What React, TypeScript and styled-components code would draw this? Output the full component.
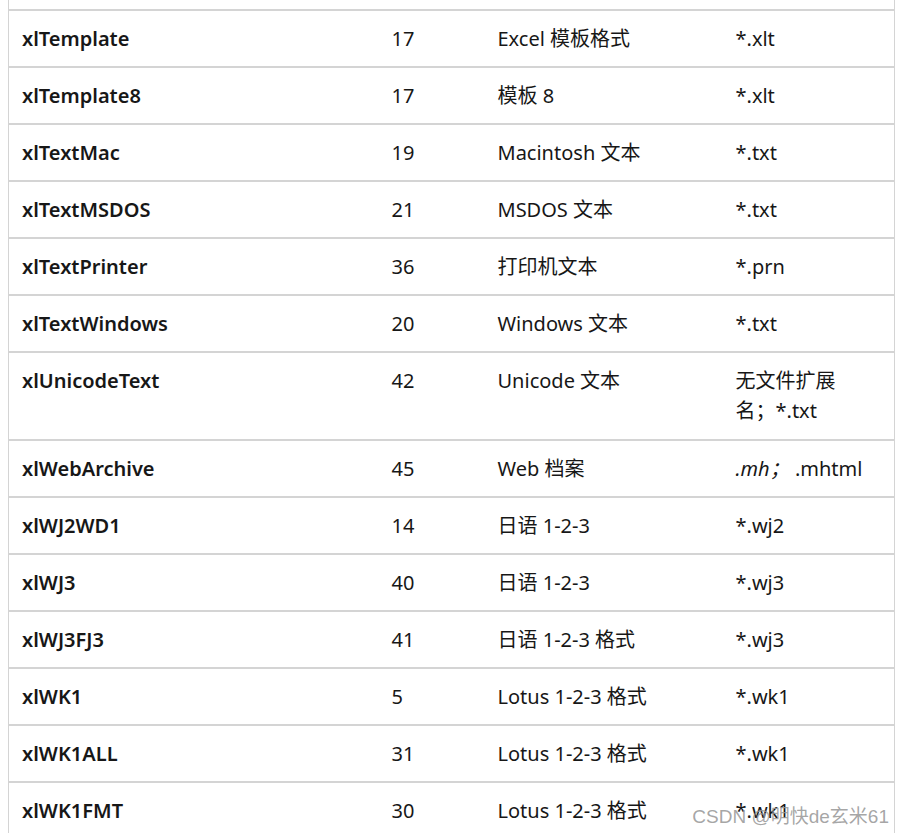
import React, {FC} from 'react';
import styled, {createGlobalStyle} from 'styled-components';

const GlobalStyle = createGlobalStyle`
  html, body {
    margin: 0;
    padding: 0;
    background: #ffffff;
  }
  body {
    padding-left: 8px;
    overflow: hidden;
    font-family: "Noto Sans", "Noto Sans CJK SC", sans-serif;
  }
`;

const Page = styled.div`
  position: relative;
  width: 887px;
  height: 833px;
  overflow: hidden;
`;

const Table = styled.table`
  width: 100%;
  border-collapse: collapse;
  table-layout: fixed;
  color: #171717;
  font-size: 20px;
  line-height: 30px;
`;

const Row = styled.tr<{tall?: boolean}>`
  border-top: 2px solid #d4d4d4;

  & > td {
    padding-bottom: ${props => props.tall ? '13px' : '12px'};
  }
`;

const StubRow = styled.tr`
  height: 10px;
`;

const Cell = styled.td<{bold?: boolean}>`
  padding: 13px 13px 12px 13px;
  vertical-align: top;
  font-weight: ${props => props.bold ? 600 : 400};
  border-left: ${props => props.bold ? '1px solid #d4d4d4' : 'none'};
  &:last-child {
    border-right: 1px solid #d4d4d4;
  }
`;

const StubCell = styled.td`
  padding: 0;
  &:first-child {
    border-left: 1px solid #d4d4d4;
  }
  &:last-child {
    border-right: 1px solid #d4d4d4;
  }
`;

const Italic = styled.em`
  font-style: italic;
`;

const Watermark = styled.div`
  position: absolute;
  right: 6px;
  top: 801px;
  font-family: "Liberation Sans", "Noto Sans CJK SC", sans-serif;
  font-size: 19px;
  color: rgba(150, 150, 150, 0.85);
  white-space: nowrap;
`;

type Entry = {
  name: string;
  value: string;
  desc: string;
  ext: React.ReactNode;
  tall?: boolean;
};

const entries: Entry[] = [
  {name: 'xlTemplate', value: '17', desc: 'Excel 模板格式', ext: '*.xlt'},
  {name: 'xlTemplate8', value: '17', desc: '模板 8', ext: '*.xlt'},
  {name: 'xlTextMac', value: '19', desc: 'Macintosh 文本', ext: '*.txt'},
  {name: 'xlTextMSDOS', value: '21', desc: 'MSDOS 文本', ext: '*.txt'},
  {name: 'xlTextPrinter', value: '36', desc: '打印机文本', ext: '*.prn'},
  {name: 'xlTextWindows', value: '20', desc: 'Windows 文本', ext: '*.txt'},
  {name: 'xlUnicodeText', value: '42', desc: 'Unicode 文本', ext: <>无文件扩展<br/>名；*.txt</>, tall: true},
  {name: 'xlWebArchive', value: '45', desc: 'Web 档案', ext: <><Italic>.mh；</Italic> .mhtml</>},
  {name: 'xlWJ2WD1', value: '14', desc: '日语 1-2-3', ext: '*.wj2'},
  {name: 'xlWJ3', value: '40', desc: '日语 1-2-3', ext: '*.wj3'},
  {name: 'xlWJ3FJ3', value: '41', desc: '日语 1-2-3 格式', ext: '*.wj3'},
  {name: 'xlWK1', value: '5', desc: 'Lotus 1-2-3 格式', ext: '*.wk1'},
  {name: 'xlWK1ALL', value: '31', desc: 'Lotus 1-2-3 格式', ext: '*.wk1'},
  {name: 'xlWK1FMT', value: '30', desc: 'Lotus 1-2-3 格式', ext: '*.wk1'},
];

const App: FC = () => {
  return (
    <Page>
      <GlobalStyle/>
      <Table>
        <colgroup>
          <col style={{width: 370}}/>
          <col style={{width: 106}}/>
          <col style={{width: 238}}/>
          <col/>
        </colgroup>
        <tbody>
          <StubRow>
            <StubCell/>
            <StubCell/>
            <StubCell/>
            <StubCell/>
          </StubRow>
          {entries.map(e => (
            <Row key={e.name} tall={e.tall}>
              <Cell bold>{e.name}</Cell>
              <Cell>{e.value}</Cell>
              <Cell>{e.desc}</Cell>
              <Cell>{e.ext}</Cell>
            </Row>
          ))}
        </tbody>
      </Table>
      <Watermark>CSDN @明快de玄米61</Watermark>
    </Page>
  );
};

export default App;
